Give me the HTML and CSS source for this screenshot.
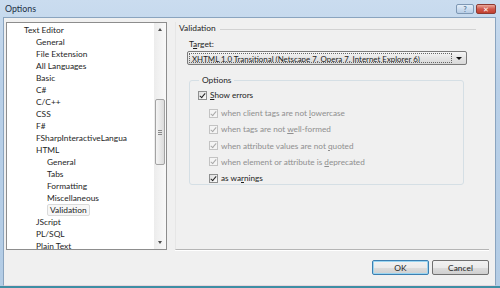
FILE: index.html
```html
<!DOCTYPE html>
<html lang="en">
<head>
<meta charset="utf-8">
<title>Options</title>
<link rel="stylesheet" href="styles.css">
</head>
<body>
<div class="window">
  <!-- title bar -->
  <div class="titlebar">
    <span class="title">Options</span>
    <div class="tbtns">
      <span class="tb help">?</span>
      <span class="tb close">&#x2715;</span>
    </div>
  </div>

  <div class="client">
    <div class="main">
      <!-- left tree -->
      <div class="tree">
        <ul class="items">
          <li class="l1">Text Editor</li>
          <li class="l2">General</li>
          <li class="l2">File Extension</li>
          <li class="l2">All Languages</li>
          <li class="l2">Basic</li>
          <li class="l2">C#</li>
          <li class="l2">C/C++</li>
          <li class="l2">CSS</li>
          <li class="l2">F#</li>
          <li class="l2">FSharpInteractiveLangua</li>
          <li class="l2">HTML</li>
          <li class="l3">General</li>
          <li class="l3">Tabs</li>
          <li class="l3">Formatting</li>
          <li class="l3">Miscellaneous</li>
          <li class="l3"><span class="sel">Validation</span></li>
          <li class="l2">JScript</li>
          <li class="l2">PL/SQL</li>
          <li class="l2">Plain Text</li>
        </ul>
        <div class="vscroll">
          <span class="arr up"></span>
          <div class="track"><div class="thumb"><i></i><i></i><i></i></div></div>
          <span class="arr down"></span>
        </div>
      </div>

      <!-- right page -->
      <div class="panel">
        <div class="heading"><span>Validation</span><i></i></div>
        <div class="field">
          <div class="lbl">T<u>a</u>rget:</div>
          <div class="combo">
            <span class="val">XHTML 1.0 Transitional (Netscape 7, Opera 7, Internet Explorer 6)</span>
            <span class="drop"></span>
          </div>
        </div>
        <fieldset class="group">
          <legend>Options</legend>
          <div class="chk"><span class="cb on"></span><span><u>S</u>how errors</span></div>
          <div class="sub">
            <div class="chk off"><span class="cb on"></span><span>when client tags are not <u>l</u>owercase</span></div>
            <div class="chk off"><span class="cb on"></span><span>when tags are not <u>w</u>ell-formed</span></div>
            <div class="chk off"><span class="cb on"></span><span>when attribute values are not <u>q</u>uoted</span></div>
            <div class="chk off"><span class="cb on"></span><span>when element or attribute is <u>d</u>eprecated</span></div>
            <div class="chk"><span class="cb on"></span><span>as wa<u>r</u>nings</span></div>
          </div>
        </fieldset>
      </div>
    </div>

    <div class="footer">
      <button class="btn def">OK</button>
      <button class="btn">Cancel</button>
    </div>
  </div>
</div>
</body>
</html>
```

FILE: styles.css
```css
:root{--txt:#1e1e1e;--dis:#8f8f8f;--face:#f0f0f0}
*{box-sizing:border-box}
body{margin:0;font-family:Lato,"Noto Sans",sans-serif;font-size:8.4px;color:var(--txt)}
ul{list-style:none;margin:0;padding:0}

.window{width:500px;height:288px;padding:0 4px 0 3px;display:flex;flex-direction:column;background:linear-gradient(#cadcef,#b9d0e8 30%,#b3cce5);border-bottom:2px solid #3e8ea4}
.titlebar{height:17px;display:flex;align-items:center;justify-content:space-between;padding-left:2px}
.title{font-size:8.8px;color:#1b2f45}
.tbtns{display:flex;gap:2px;align-self:flex-start;margin-top:4px}
.tb{height:10px;display:flex;align-items:center;justify-content:center;border:1px solid #7e98b4;border-radius:2px;font-size:7px;color:#fff}
.tb.help{width:18px;background:linear-gradient(#e3edf8,#b7cde6);color:#5d7897;font-weight:700}
.tb.close{width:20px;border-color:#8d3a32;background:linear-gradient(#eaa99c,#d0574a 50%,#c2402f)}

.client{flex:1;background:var(--face);border:1px solid #8aa4bf;border-bottom-color:#e7d6de;padding:4px 0 0 2px;display:flex;flex-direction:column}
.main{display:flex;height:228px}

.tree{width:161px;border:1px solid #8d8d8d;background:#fff;display:flex;overflow:hidden}
.items{flex:1;padding-top:1px}
.items li{height:12px;line-height:12px;white-space:nowrap}
.l1{padding-left:17px}
.l2{padding-left:29px}
.l3{padding-left:40px}
.sel{display:inline-block;height:12px;padding:0 2px;border:1px solid #dadada;border-radius:2px;background:#f7f7f7;line-height:10px}

.vscroll{width:12px;display:flex;flex-direction:column;background:linear-gradient(90deg,#ececec,#f9f9f9)}
.arr{height:13px;display:flex;align-items:center;justify-content:center}
.arr::after{content:"";border:2px solid transparent}
.arr.up::after{border-bottom:3px solid #4d4d4d;border-top:0}
.arr.down::after{border-top:3px solid #4d4d4d;border-bottom:0}
.track{flex:1;padding-top:63px}
.thumb{height:66px;margin:0 1px;border:1px solid #a3a3a3;border-radius:2px;background:linear-gradient(90deg,#f4f4f4,#dcdcdc);display:flex;flex-direction:column;align-items:center;justify-content:center;gap:1px}
.thumb i{width:4px;height:1px;background:#8a8a8a}

.panel{width:314px;margin-left:8px;border-bottom:1px solid #b5b5b5;box-shadow:0 1px 0 #fff;border-left:1px solid #e6e6e6;display:flex;flex-direction:column}
.heading{height:11px;display:flex;align-items:center;gap:4px;padding-left:3px;padding-right:13px}
.heading i{flex:1;height:1px;background:#d2d2d2;margin-top:3px}
.field{padding-left:13px;margin-top:5px}
.lbl{height:12px;line-height:12px}
.combo{width:280px;height:14px;margin:1px 0 0 -2px;border:1px solid #7a7a7a;border-radius:2px;background:linear-gradient(#f6f6f6,#e5e5e5 50%,#d9d9d9);display:flex;align-items:center;padding:1px}
.val{flex:1;height:10px;line-height:10px;padding-left:2px;border:1px dotted #666;white-space:nowrap;overflow:hidden;font-size:7.9px}
.drop{width:13px;display:flex;justify-content:center}
.drop::after{content:"";border:3px solid transparent;border-top:3px solid #111;border-bottom:0}

.group{width:275px;height:110px;margin:10px 0 0 13px;padding:0 0 0 8px;border:1px solid #d5dfe5;border-radius:3px;font-size:8.2px}
.group legend{padding:0 3px;margin-left:1px;line-height:10px;font-size:8.4px}
.chk{height:16.2px;display:flex;align-items:center;gap:3px}
.chk:first-of-type{margin-top:2px}
.sub{padding-left:11px}
.chk.off{color:var(--dis)}
.cb{width:9px;height:9px;border:1px solid #8e8f8f;background:linear-gradient(135deg,#dedede,#fbfbfb);position:relative}
.cb.on::after{content:"";position:absolute;left:2px;top:0;width:2px;height:5px;border:solid #242424;border-width:0 1.5px 1.5px 0;transform:rotate(40deg)}
.off .cb{border-color:#c3c3c3;background:#f4f4f4}
.off .cb.on::after{border-color:#a9a9a9}

.footer{display:flex;justify-content:flex-end;gap:3px;padding:10px 6px 0 0}
.btn{appearance:none;width:57px;height:15px;padding:0;font:inherit;color:var(--txt);border:1px solid #707070;border-radius:2px;background:linear-gradient(#f2f2f2,#ebebeb 50%,#dddddd 51%,#cfcfcf)}
.btn.def{border-color:#3c7fb1;box-shadow:inset 0 0 0 1px #9ad5f1}
```
